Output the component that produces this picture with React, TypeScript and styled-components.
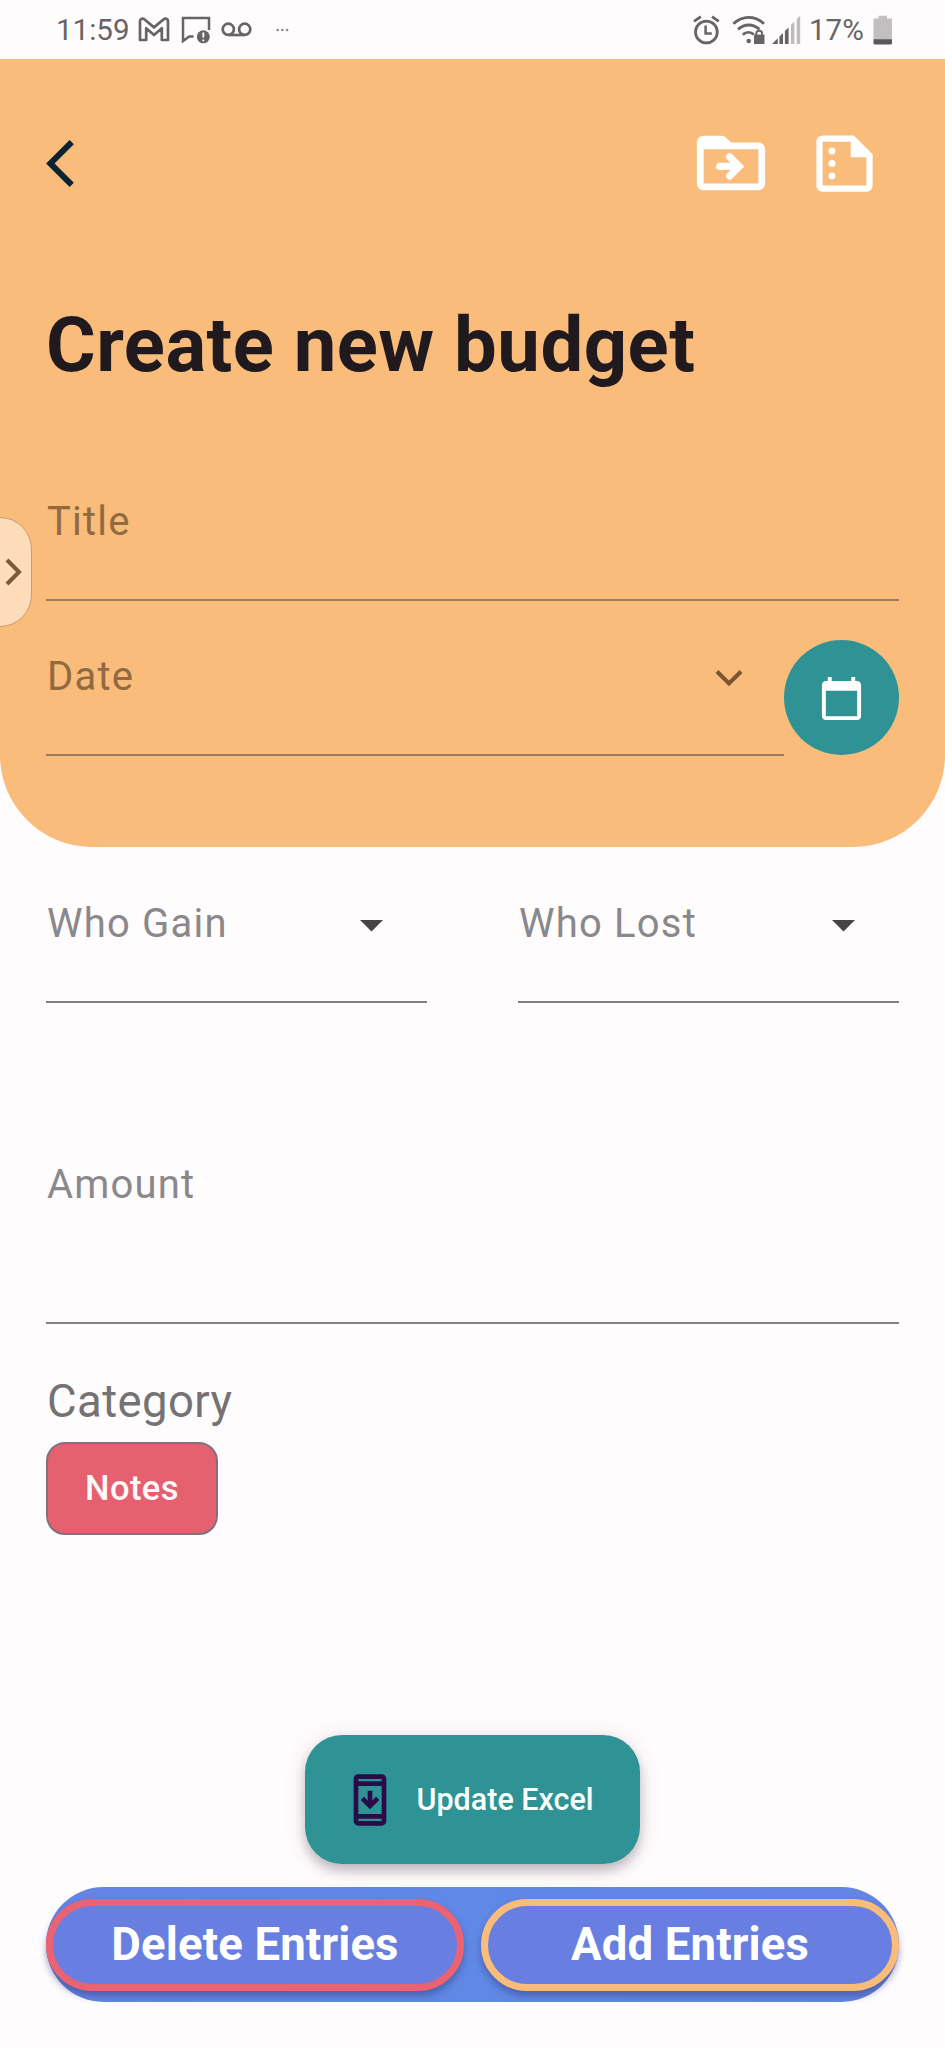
import React from "react";
import styled, { createGlobalStyle } from "styled-components";

const color = {
  page: "#fffcfe",
  sand: "#f9bc7a",
  teal: "#2f9396",
  rose: "#e5616f",
  ink: "#201a1f",
  status: "#686466",
};

const GlobalStyle = createGlobalStyle`
  *, *::before, *::after { box-sizing: border-box; }
  body { margin: 0; background: ${color.page}; font-family: Roboto, "Liberation Sans", sans-serif; }
  button { font-family: inherit; cursor: pointer; }
  svg { display: block; flex: none; }
`;

const Screen = styled.div`
  position: relative;
  width: 945px;
  height: 2048px;
  overflow: hidden;
  background: ${color.page};
`;

const StatusBar = styled.div`
  display: flex;
  align-items: center;
  justify-content: space-between;
  height: 59px;
  padding: 0 52px 0 56px;
  color: ${color.status};
  font-size: 29.5px;
  line-height: 60px;
`;

const StatusGroup = styled.div`
  display: flex;
  align-items: center;
`;

const StatusText = styled.span<{ $width: number }>`
  width: ${(p) => p.$width}px;
  white-space: nowrap;
`;

const Header = styled.header`
  height: 788px;
  padding: 74px 46px 0;
  background: ${color.sand};
  border-radius: 0 0 92px 92px;
`;

const TopBar = styled.div`
  display: flex;
  align-items: center;
  justify-content: space-between;
  height: 60px;
`;

const IconButton = styled.button`
  display: flex;
  padding: 0;
  border: 0;
  background: none;
  color: inherit;
`;

const Actions = styled.div`
  display: flex;
  align-items: center;
  gap: 35px;
  padding-right: 17.5px;
  color: #fff;
`;

const Heading = styled.h1`
  margin: 107px 0 0;
  font-size: 76px;
  line-height: 90px;
  font-weight: 700;
  letter-spacing: 0.5px;
  color: ${color.ink};
  white-space: nowrap;
`;

const Field = styled.div<{ $height: number; $top?: number; $pad: number; $inset?: number; $onSand?: boolean }>`
  display: flex;
  flex: 1;
  align-items: flex-start;
  justify-content: space-between;
  height: ${(p) => p.$height}px;
  margin-top: ${(p) => p.$top ?? 0}px;
  padding: ${(p) => p.$pad}px ${(p) => p.$inset ?? 0}px 0 1px;
  border-bottom: 2px solid ${(p) => (p.$onSand ? "#9c7c60" : "#848085")};
  color: ${(p) => (p.$onSand ? "#916a41" : "#8a888a")};
`;

const Label = styled.label`
  font-size: 40px;
  line-height: 48px;
  letter-spacing: 1.2px;
  white-space: nowrap;
`;

const Row = styled.div<{ $gap: number; $top: number }>`
  display: flex;
  gap: ${(p) => p.$gap}px;
  margin-top: ${(p) => p.$top}px;
`;

const RoundButton = styled.button`
  display: flex;
  align-items: center;
  justify-content: center;
  width: 115px;
  height: 115px;
  padding: 2px 0 0;
  border: 0;
  border-radius: 50%;
  background: ${color.teal};
  color: #fff;
`;

const Form = styled.main`
  display: flex;
  flex-direction: column;
  padding: 0 46px;
`;

const SectionTitle = styled.h2`
  margin: 51px 0 0;
  padding-left: 1px;
  font-size: 45.5px;
  line-height: 54px;
  font-weight: 400;
  letter-spacing: 0.4px;
  color: #757274;
`;

const Chip = styled.button`
  align-self: flex-start;
  width: 172px;
  height: 93px;
  margin-top: 13px;
  padding: 0 0 2px;
  border: 2px solid #82717d;
  border-radius: 19px;
  background: ${color.rose};
  color: #fffafa;
  font-size: 34.5px;
  font-weight: 500;
  letter-spacing: 0.4px;
`;

const UpdateButton = styled.button`
  display: flex;
  align-items: center;
  align-self: center;
  width: 335px;
  height: 129px;
  margin-top: 200px;
  padding: 0 0 0 37px;
  gap: 18.5px;
  border: 0;
  border-radius: 37px;
  background: ${color.teal};
  color: #fafffc;
  font-size: 30.5px;
  font-weight: 500;
  white-space: nowrap;
  box-shadow: 0 7px 11px rgba(60, 40, 50, 0.26), 0 3px 24px rgba(60, 40, 50, 0.12);
`;

const EntryBar = styled.div`
  display: flex;
  align-items: center;
  gap: 17px;
  height: 115px;
  margin-top: 23px;
  border-radius: 58px;
  background: linear-gradient(90deg, #6584e4, #6088e5 50%, #6584e4);
`;

const EntryButton = styled.button<{ $ring: string }>`
  flex: 1;
  height: 92px;
  padding: 0;
  border: 7px solid ${(p) => p.$ring};
  border-radius: 46px;
  background: #687fe1;
  color: #fff;
  font-size: 45.5px;
  font-weight: 700;
  letter-spacing: 0.15px;
  box-shadow: 0 5px 7px rgba(40, 50, 110, 0.42);
`;

const SideTab = styled.div`
  position: absolute;
  top: 517px;
  left: -2px;
  display: flex;
  align-items: center;
  width: 34px;
  height: 110px;
  padding-left: 6px;
  border: 1.5px solid #c79b6e;
  border-radius: 0 32px 32px 0;
  background: #fcdcb9;
`;

const GmailIcon = () => (
  <svg width="32" height="25" viewBox="0 0 32 25" fill="none" stroke="currentColor" strokeWidth="2.7" strokeLinejoin="round">
    <path d="M2 4.2V23h6.2V11.2L16 18l7.8-6.8V23H30V4.2C30 1.6 27.2 1 25.4 2.5L16 10.4 6.6 2.5C4.8 1 2 1.6 2 4.2z" />
  </svg>
);

const MessageAlertIcon = () => (
  <svg width="30" height="28" viewBox="0 0 30 28" fill="none">
    <path d="M12.5 20.5H8.2L2 25V2h26v12" stroke="currentColor" strokeWidth="2.5" />
    <circle cx="22.3" cy="20.8" r="6.5" fill="currentColor" />
    <path d="M22.3 16.6v5M22.3 23.4v1.8" stroke={color.page} strokeWidth="1.9" />
  </svg>
);

const VoicemailIcon = () => (
  <svg width="31" height="15" viewBox="0 0 31 15" fill="none" stroke="currentColor" strokeWidth="2.7">
    <circle cx="7.3" cy="7.3" r="5.6" />
    <circle cx="23.7" cy="7.3" r="5.6" />
    <path d="M7.3 13h16.4" />
  </svg>
);

const MoreDots = () => (
  <svg width="13" height="4" viewBox="0 0 13 4" fill="currentColor" opacity="0.75">
    <circle cx="1.7" cy="2" r="1.3" />
    <circle cx="6.4" cy="2" r="1.3" />
    <circle cx="11.1" cy="2" r="1.3" />
  </svg>
);

const AlarmIcon = () => (
  <svg width="27" height="30" viewBox="0 0 27 30" fill="none" stroke="currentColor" strokeWidth="2.8">
    <circle cx="13.4" cy="17" r="10.9" />
    <path d="M12.6 10.5v8h6.2" strokeWidth="2.5" />
    <path d="M1 6.4 7.8 1.6M19 1.6l6.8 4.8" />
  </svg>
);

const WifiLockIcon = () => (
  <svg width="34" height="29" viewBox="0 0 34 29" fill="none" stroke="currentColor" strokeWidth="2.8">
    <path d="M1.4 8.8c9-8.6 21.6-8.6 30.6 0" />
    <path d="M6 14.4c6.4-5.9 15-5.9 21.4 0" />
    <path d="M10.8 19.6c3.5-3.1 7.8-3.1 11 0" />
    <circle cx="16.7" cy="26" r="2.3" fill="currentColor" stroke="none" />
    <path d="M22 19.6h10.5V29H22z" fill="currentColor" stroke="none" />
    <path d="M24.3 20v-1.6c0-3.6 5.8-3.6 5.8 0V20" strokeWidth="1.9" />
  </svg>
);

const SignalIcon = () => (
  <svg width="29" height="29" viewBox="0 0 29 29" fill="currentColor">
    <path d="M0 29l5.8-5.8V29zM7.4 21.6l3.6-3.6v11H7.4zM12.9 16.1l3.7-3.7V29h-3.7z" />
    <path d="M18.9 10.1l3.5-3.5V29h-3.5zM24.7 4.3L28.2.8V29h-3.5z" opacity="0.42" />
  </svg>
);

const BatteryIcon = () => (
  <svg width="20" height="30" viewBox="0 0 20 30">
    <path d="M.5 3.5h5V.8H14v2.7h5V25H.5z" fill="#c3bfc1" />
    <path d="M.5 24.3H19v4c0 .7-.5 1.200-1.200 1.200H1.700c-.7 0-1.200-.5-1.200-1.200z" fill="#5d595b" />
  </svg>
);

const BackIcon = () => (
  <svg width="28" height="57" viewBox="0 0 11.7 24">
    <path d="M11.67 3.87 9.9 2.1 0 12l9.9 9.9 1.77-1.77L3.54 12z" fill="#0b2230" />
  </svg>
);

const FolderMoveIcon = () => (
  <svg width="82" height="82" viewBox="0 0 24 24">
    <path
      fillRule="evenodd"
      d="M20 6h-8l-1.4-1.400C10.200 4.200 9.700 4 9.200 4H4c-1.100 0-2 .9-2 2v12c0 1.100.9 2 2 2h16c1.100 0 2-.9 2-2V8c0-1.100-.9-2-2-2zm0 12H4V8h16z"
      fill="currentColor"
    />
    <path d="M8.700 13h5M11.600 10.200l2.800 2.800-2.800 2.800" fill="none" stroke="currentColor" strokeWidth="2.100" strokeLinecap="round" />
  </svg>
);

const SummaryIcon = () => (
  <svg width="75" height="75" viewBox="0 0 24 24" fill="currentColor">
    <path
      fillRule="evenodd"
      d="M15 3H5c-1.100 0-2 .9-2 2v14c0 1.100.9 2 2 2h14c1.100 0 2-.9 2-2V9zM5 19V5h9v5h5v9z"
    />
    <circle cx="8" cy="8" r="1.100" />
    <circle cx="8" cy="12" r="1.100" />
    <circle cx="8" cy="16" r="1.100" />
  </svg>
);

const ChevronDown = () => (
  <svg width="28" height="48" viewBox="0 0 28 48" fill="none">
    <path d="M2 18.500l12 12 12-12" stroke="#7d5431" strokeWidth="4" />
  </svg>
);

const CaretDown = () => (
  <svg width="23" height="48" viewBox="0 0 23 48">
    <path d="M0 20h23L11.500 31.500z" fill="#474346" />
  </svg>
);

const CalendarIcon = () => (
  <svg width="47" height="47" viewBox="0 0 24 24" fill="currentColor">
    <path d="M20 3h-1V1h-2v2H7V1H5v2H4c-1.100 0-2 .9-2 2v16c0 1.100.9 2 2 2h16c1.100 0 2-.9 2-2V5c0-1.100-.9-2-2-2zm0 18H4V8h16v13z" />
  </svg>
);

const PhoneUpdateIcon = () => (
  <svg width="56" height="56" viewBox="0 0 24 24" fill="#280b47">
    <path
      fillRule="evenodd"
      d="M17 1H7c-1.100 0-2 .9-2 2v18c0 1.100.9 2 2 2h10c1.100 0 2-.9 2-2V3c0-1.100-.9-2-2-2zm0 20H7v-1h10zm0-3H7V6h10zm0-14H7V3h10z"
    />
    <path d="M16 12l-4 4-4-4 1.410-1.410L11 12.170V8h2v4.170l1.590-1.580z" />
  </svg>
);

const Spacer = styled.span<{ $w: number }>`
  width: ${(p) => p.$w}px;
`;

export default function App() {
  return (
    <Screen>
      <GlobalStyle />
      <StatusBar>
        <StatusGroup>
          <StatusText $width={82}>11:59</StatusText>
          <GmailIcon />
          <Spacer $w={11} />
          <MessageAlertIcon />
          <Spacer $w={10} />
          <VoicemailIcon />
          <Spacer $w={24} />
          <MoreDots />
        </StatusGroup>
        <StatusGroup>
          <AlarmIcon />
          <Spacer $w={12} />
          <WifiLockIcon />
          <Spacer $w={6} />
          <SignalIcon />
          <Spacer $w={8} />
          <StatusText $width={64}>17%</StatusText>
          <BatteryIcon />
        </StatusGroup>
      </StatusBar>

      <Header>
        <TopBar>
          <IconButton aria-label="Back">
            <BackIcon />
          </IconButton>
          <Actions>
            <IconButton aria-label="Move to folder">
              <FolderMoveIcon />
            </IconButton>
            <IconButton aria-label="Summary">
              <SummaryIcon />
            </IconButton>
          </Actions>
        </TopBar>
        <Heading>Create new budget</Heading>
        <Field $height={121} $top={90} $pad={18} $onSand>
          <Label>Title</Label>
        </Field>
        <Row $gap={0} $top={39}>
          <Field $height={116} $pad={13} $inset={41} $onSand>
            <Label>Date</Label>
            <ChevronDown />
          </Field>
          <RoundButton aria-label="Pick a date">
            <CalendarIcon />
          </RoundButton>
        </Row>
      </Header>

      <Form>
        <Row $gap={91} $top={52}>
          <Field $height={104} $pad={1} $inset={44}>
            <Label>Who Gain</Label>
            <CaretDown />
          </Field>
          <Field $height={104} $pad={1} $inset={44}>
            <Label>Who Lost</Label>
            <CaretDown />
          </Field>
        </Row>
        <Row $gap={0} $top={157}>
          <Field $height={164} $pad={1}>
            <Label>Amount</Label>
          </Field>
        </Row>
        <SectionTitle>Category</SectionTitle>
        <Chip>Notes</Chip>
        <UpdateButton>
          <PhoneUpdateIcon />
          Update Excel
        </UpdateButton>
        <EntryBar>
          <EntryButton $ring="#eb6272">Delete Entries</EntryButton>
          <EntryButton $ring={color.sand}>Add Entries</EntryButton>
        </EntryBar>
      </Form>

      <SideTab>
        <svg width="18" height="28" viewBox="0 0 18 28" fill="none">
          <path d="M2 2l12 12L2 26" stroke="#7d5835" strokeWidth="4" />
        </svg>
      </SideTab>
    </Screen>
  );
}
